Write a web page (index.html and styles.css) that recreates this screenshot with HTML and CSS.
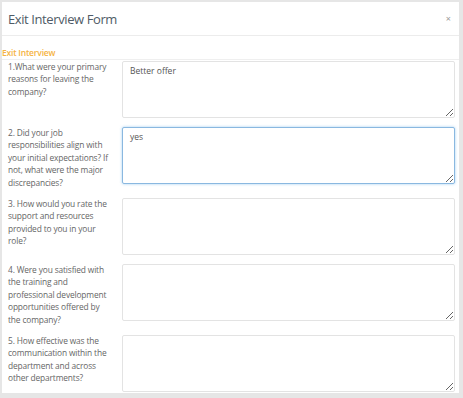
FILE: index.html
```html
<!DOCTYPE html>
<html lang="en">
<head>
    <meta charset="UTF-8">
    <meta name="viewport" content="width=device-width, initial-scale=1.0">
    <title>Exit Interview Form</title>
    <link rel="stylesheet" href="styles.css">
</head>
<body>
    <div class="modal">
        <div class="modal-header">
            <h4>Exit Interview Form</h4>
            <span class="close">&times;</span>
        </div>

        <div class="modal-body">
            <div class="section-title">Exit Interview</div>

            <div class="form-row">
                <label>1.What were your primary reasons for leaving the company?</label>
                <textarea>Better offer</textarea>
            </div>

            <div class="form-row">
                <label>2. Did your job responsibilities align with your initial expectations? If not, what were the major discrepancies?</label>
                <textarea class="focused">yes</textarea>
            </div>

            <div class="form-row">
                <label>3. How would you rate the support and resources provided to you in your role?</label>
                <textarea></textarea>
            </div>

            <div class="form-row">
                <label>4. Were you satisfied with the training and professional development opportunities offered by the company?</label>
                <textarea></textarea>
            </div>

            <div class="form-row">
                <label>5. How effective was the communication within the department and across other departments?</label>
                <textarea></textarea>
            </div>
        </div>
    </div>
</body>
</html>
```

FILE: styles.css
```css
* {
    margin: 0;
    padding: 0;
    box-sizing: border-box;
}

body {
    font-family: 'Open Sans', 'Liberation Sans', sans-serif;
    background: #e6e6e6;
    padding: 2px 4px 5px 2px;
    height: 100vh;
    overflow: hidden;
}

.modal {
    background: white;
    height: 100%;
    overflow: hidden;
}

.modal-header {
    display: flex;
    justify-content: space-between;
    align-items: center;
    padding: 0 8px 0 6px;
    height: 34px;
    border-bottom: 1px solid #ececec;
}

.modal-header h4 {
    font-size: 13px;
    font-weight: 400;
    letter-spacing: -0.4px;
    color: #4f5b66;
}

.close {
    font-size: 9px;
    color: #999;
}

.section-title {
    font-size: 8.5px;
    font-weight: 600;
    letter-spacing: -0.2px;
    color: #f5b342;
    padding: 11px 0 1px 0;
    border-bottom: 1px solid #efefef;
    margin-bottom: 1px;
}

.form-row {
    display: flex;
    align-items: flex-start;
    gap: 9px;
    padding: 0 4px 0 6px;
    margin-bottom: 9px;
}

.form-row label {
    width: 105px;
    flex-shrink: 0;
    font-size: 8.4px;
    letter-spacing: -0.15px;
    line-height: 12.4px;
    color: #666;
}

.form-row textarea {
    flex: 1;
    height: 57px;
    resize: vertical;
    border: 1px solid #e3e3e3;
    border-radius: 2px;
    padding: 3px 7px;
    font-family: inherit;
    font-size: 8.5px;
    color: #555;
    outline: none;
}

.form-row textarea.focused {
    border-color: #8ab8e0;
    box-shadow: 0 0 3px rgba(102, 175, 233, 0.6);
}
```
